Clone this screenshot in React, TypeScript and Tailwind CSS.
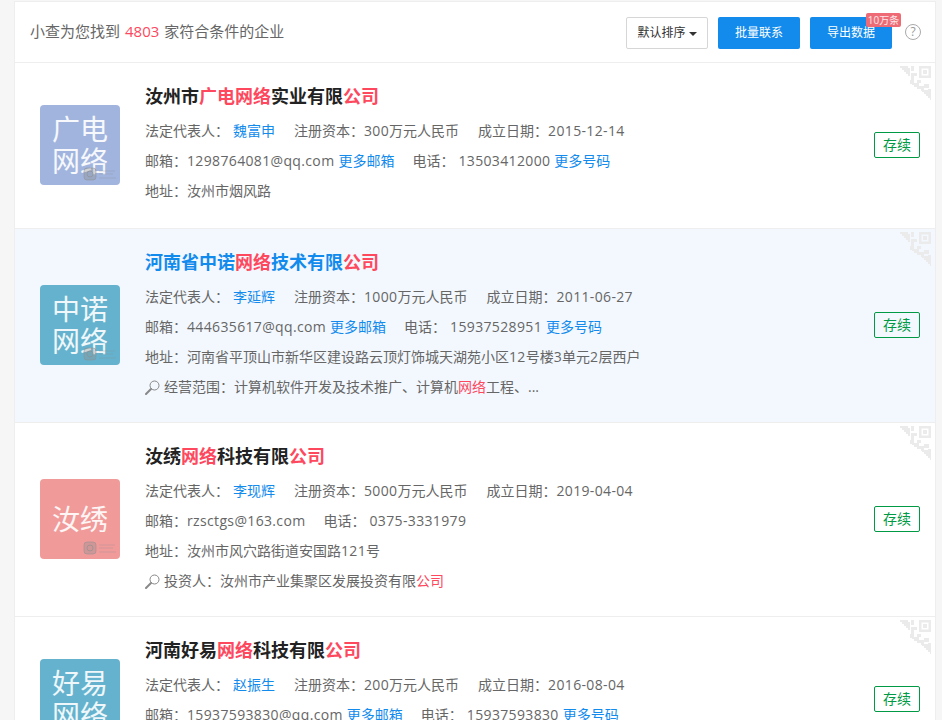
import React from 'react';

type Seg = { t: string; hl?: boolean };

type Company = {
  title: Seg[];
  logo: [string, string];
  logoBg: string;
  person: string;
  capital: string;
  date: string;
  email: string;
  moreEmail?: boolean;
  phone: string;
  morePhone?: boolean;
  address: string;
  extra?: Seg[];
  active?: boolean;
};

const companies: Company[] = [
  {
    title: [{ t: '汝州市' }, { t: '广电网络', hl: true }, { t: '实业有限' }, { t: '公司', hl: true }],
    logo: ['广电', '网络'],
    logoBg: 'bg-[#a0b4de]',
    person: '魏富申',
    capital: '300万元人民币',
    date: '2015-12-14',
    email: '1298764081@qq.com',
    moreEmail: true,
    phone: '13503412000',
    morePhone: true,
    address: '汝州市烟风路',
  },
  {
    title: [{ t: '河南省中诺' }, { t: '网络', hl: true }, { t: '技术有限' }, { t: '公司', hl: true }],
    logo: ['中诺', '网络'],
    logoBg: 'bg-[#64b2cd]',
    person: '李延辉',
    capital: '1000万元人民币',
    date: '2011-06-27',
    email: '444635617@qq.com',
    moreEmail: true,
    phone: '15937528951',
    morePhone: true,
    address: '河南省平顶山市新华区建设路云顶灯饰城天湖苑小区12号楼3单元2层西户',
    extra: [{ t: '经营范围：计算机软件开发及技术推广、计算机' }, { t: '网络', hl: true }, { t: '工程、...' }],
    active: true,
  },
  {
    title: [{ t: '汝绣' }, { t: '网络', hl: true }, { t: '科技有限' }, { t: '公司', hl: true }],
    logo: ['汝绣', ''],
    logoBg: 'bg-[#f09a9a]',
    person: '李现辉',
    capital: '5000万元人民币',
    date: '2019-04-04',
    email: 'rzsctgs@163.com',
    phone: '0375-3331979',
    address: '汝州市风穴路街道安国路121号',
    extra: [{ t: '投资人：汝州市产业集聚区发展投资有限' }, { t: '公司', hl: true }],
  },
  {
    title: [{ t: '河南好易' }, { t: '网络', hl: true }, { t: '科技有限' }, { t: '公司', hl: true }],
    logo: ['好易', '网络'],
    logoBg: 'bg-[#64b2cd]',
    person: '赵振生',
    capital: '200万元人民币',
    date: '2016-08-04',
    email: '15937593830@qq.com',
    moreEmail: true,
    phone: '15937593830',
    morePhone: true,
    address: '汝州市',
  },
];

// Latin and digit runs sit a little wider than the installed font sets them
function Num({ children }: { children: string }) {
  return (
    <>
      {children.split(/([0-9A-Za-z@.\-]+)/).map((part, i) =>
        i % 2 ? (
          <span key={i} className="tracking-[0.35px]">
            {part}
          </span>
        ) : (
          part
        )
      )}
    </>
  );
}

// Corner QR mark, faded out along the diagonal
function QrCorner() {
  return (
    <svg className="absolute top-[3px] right-[3px]" width="34" height="34" viewBox="0 0 34 34" fill="#ebebeb">
      <path d="M0 0h10v2h2v8h-2v-2h-2v-2h-2v-2h-2v-2h-2v-2h-2z" />
      <path d="M13 0h3v5h-3zM13 7h6v3h-3v4h-3z" />
      <path fillRule="evenodd" d="M21 0h12v12h-12zM23.500 2.500v7h7v-7z" />
      <path d="M25 4h4v4h-4z" />
      <path d="M12 14h4v3h3v-3h4v3h-2v3h5v-2h5v4h-5v3h-3v-2h-4v-2h-3v-2h-2v-1h-2z" />
      <path d="M24 24h6v-1h3v11h-1v-2h-2v-2h-2v-2h-2v-2h-2z" />
    </svg>
  );
}

// Small watermark in the lower right of a logo
function LogoMark() {
  return (
    <svg className="absolute left-[43px] top-[62px]" width="36" height="14" viewBox="0 0 36 14" fill="none">
      <rect x="1" y="1" width="12" height="12" rx="3" fill="#8f8f8f" fillOpacity="0.35" stroke="#8f8f8f" strokeOpacity="0.5" />
      <circle cx="7" cy="7" r="3" stroke="#8f8f8f" strokeOpacity="0.6" />
      <path d="M16 4h16M16 7h14M16 11h17" stroke="#8f8f8f" strokeOpacity="0.3" />
    </svg>
  );
}

function SearchGlass() {
  return (
    <svg width="15" height="15" viewBox="0 0 15 15" fill="none" stroke="#888" className="mr-1 shrink-0">
      <circle cx="9.500" cy="5.500" r="4.500" />
      <path d="M6 9l-5 5" strokeWidth="2" strokeLinecap="round" />
    </svg>
  );
}

function Segments({ segs, hlClass }: { segs: Seg[]; hlClass: string }) {
  return (
    <>
      {segs.map((s, i) =>
        s.hl ? (
          <span key={i} className={hlClass}>
            {s.t}
          </span>
        ) : (
          <span key={i}>{s.t}</span>
        )
      )}
    </>
  );
}

function CompanyRow({ c }: { c: Company }) {
  return (
    <div
      className={`relative flex items-center min-h-[166px] border-b border-[#eeeeee] pl-[25px] pr-[15px] pt-[19px] pb-5 ${
        c.active ? 'bg-[#f3f8fe]' : 'bg-white'
      }`}
    >
      <QrCorner />
      <div
        className={`relative flex flex-col items-center justify-center w-20 h-20 rounded-[4px] mr-[25px] shrink-0 text-[28px] leading-8 text-white/90 ${c.logoBg}`}
      >
        <span>{c.logo[0]}</span>
        {c.logo[1] && <span>{c.logo[1]}</span>}
        <LogoMark />
      </div>

      <div className="flex-1 text-sm text-[#666666] self-start">
        <div className={`h-7 leading-7 text-lg font-bold mb-1.5 ${c.active ? 'text-[#128bed]' : 'text-[#222222]'}`}>
          <Segments segs={c.title} hlClass="text-[#fd485e]" />
        </div>
        <div className="flex h-[30px] items-center">
          <span>法定代表人：</span>
          <span className="ml-1 mr-[19px] text-[#128bed]">{c.person}</span>
          <span className="mr-[19px]">
            注册资本：<Num>{c.capital}</Num>
          </span>
          <span>
            成立日期：<Num>{c.date}</Num>
          </span>
        </div>
        <div className="flex h-[30px] items-center">
          <span>
            邮箱：<Num>{c.email}</Num>
          </span>
          {c.moreEmail && <span className="ml-1 text-[#128bed]">更多邮箱</span>}
          <span className="ml-[18px]">电话：</span>
          <span className="ml-1">
            <Num>{c.phone}</Num>
          </span>
          {c.morePhone && <span className="ml-1 text-[#128bed]">更多号码</span>}
        </div>
        <div className="flex h-[30px] items-center">
          <span>
            地址：<Num>{c.address}</Num>
          </span>
        </div>
        {c.extra && (
          <div className="flex h-[30px] items-center">
            <SearchGlass />
            <span>
              <Segments segs={c.extra} hlClass="text-[#fd485e]" />
            </span>
          </div>
        )}
      </div>

      <span className="flex items-center justify-center w-[46px] h-[26px] rounded-[2px] border border-[#009944] text-sm text-[#009944] shrink-0">
        存续
      </span>
    </div>
  );
}

export default function App() {
  return (
    <div className="h-[720px] overflow-hidden bg-[#f6f6f6] pt-px pl-[14px] font-['Open_Sans','Noto_Sans_CJK_SC',sans-serif]">
      <div className="w-[922px] bg-white border-x border-t border-[#eeeeee]">
        <div className="flex items-center justify-between h-[61px] border-b border-[#eeeeee] pl-[15px] pr-[14px]">
          <div className="flex -mt-0.5 text-[15px] text-[#666666]">
            小查为您找到<span className="mx-[5px] text-[#fd485e]">4803</span>家符合条件的企业
          </div>
          <div className="flex items-center mt-0.5">
            <button className="flex items-center justify-center w-[82px] h-8 rounded-[2px] border border-[#d6d6d6] bg-white text-xs text-[#333333]">
              默认排序
              <span className="ml-[3px] mt-px w-0 h-0 border-x-4 border-t-4 border-x-transparent border-t-[#333333]" />
            </button>
            <button className="w-[82px] h-8 ml-2.5 rounded-[2px] bg-[#128bed] text-xs text-white">批量联系</button>
            <button className="relative w-[82px] h-8 ml-2.5 rounded-[2px] bg-[#128bed] text-xs text-white">
              导出数据
              <span className="absolute -top-1 left-14 w-[35px] h-[14px] rounded-[2px] bg-[#ee6b76] text-[10px] leading-[14px] text-white/85">
                10万条
              </span>
            </button>
            <span className="flex items-center justify-center w-4 h-4 ml-[13px] -mt-[3px] rounded-full border border-[#aaaaaa] text-xs text-[#999999]">
              ?
            </span>
          </div>
        </div>
        {companies.map((c) => (
          <CompanyRow key={c.logo[0]} c={c} />
        ))}
      </div>
    </div>
  );
}
